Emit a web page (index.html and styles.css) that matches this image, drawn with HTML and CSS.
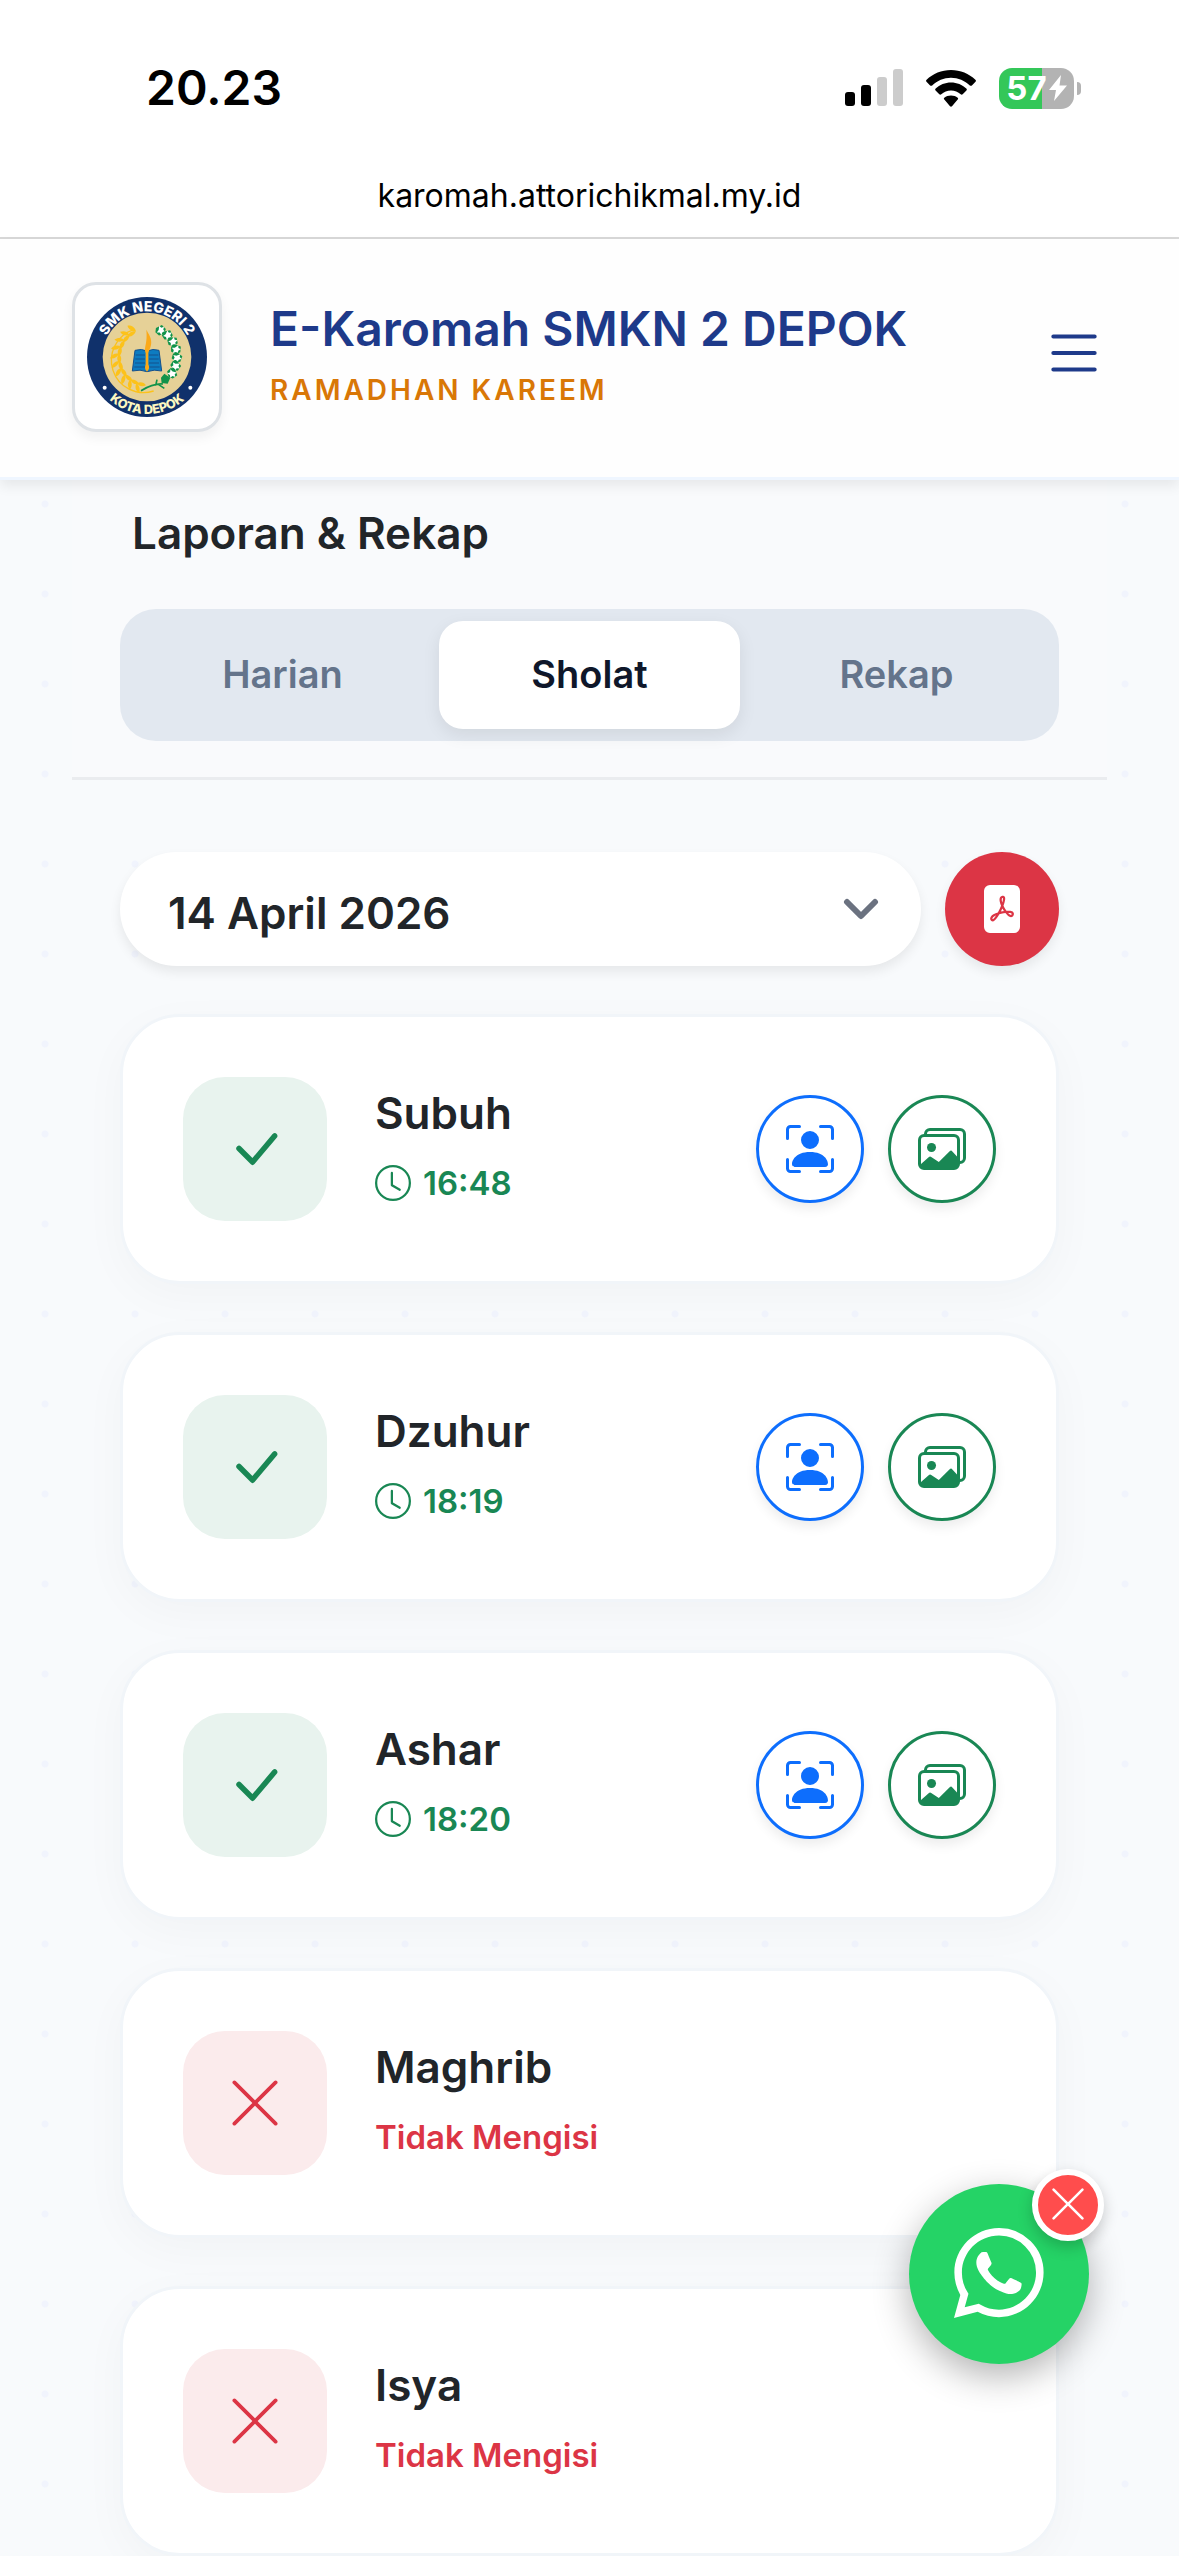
FILE: index.html
```html
<!DOCTYPE html>
<html lang="id">
<head>
    <meta charset="UTF-8">
    <meta name="viewport" content="width=device-width, initial-scale=1">
    <title>E-Karomah SMKN 2 DEPOK</title>
    <link rel="stylesheet" href="styles.css">
</head>
<body>
    <!-- icons -->
    <svg class="sprite" aria-hidden="true">
        <symbol id="check" viewBox="0 0 16 16"><path d="M12.736 3.97a.733.733 0 0 1 1.047 0c.286.289.29.756.01 1.05L7.88 12.01a.733.733 0 0 1-1.065.02L3.217 8.384a.757.757 0 0 1 0-1.06.733.733 0 0 1 1.047 0l3.052 3.093 5.4-6.425z"/></symbol>
        <symbol id="cross" viewBox="0 0 16 16"><path d="M2.146 2.854a.5.5 0 1 1 .708-.708L8 7.293l5.146-5.147a.5.5 0 0 1 .708.708L8.707 8l5.147 5.146a.5.5 0 0 1-.708.708L8 8.707l-5.146 5.147a.5.5 0 0 1-.708-.708L7.293 8z"/></symbol>
        <symbol id="clock" viewBox="0 0 16 16"><path d="M8 3.5a.5.5 0 0 0-1 0V9a.5.5 0 0 0 .252.434l3.5 2a.5.5 0 0 0 .496-.868L8 8.71z"/><path d="M8 16A8 8 0 1 0 8 0a8 8 0 0 0 0 16m7-8A7 7 0 1 1 1 8a7 7 0 0 1 14 0"/></symbol>
        <symbol id="person" viewBox="0 0 16 16"><path d="M1.5 1a.5.5 0 0 0-.5.5v3a.5.5 0 0 1-1 0v-3A1.5 1.5 0 0 1 1.5 0h3a.5.5 0 0 1 0 1zM11 .5a.5.5 0 0 1 .5-.5h3A1.5 1.5 0 0 1 16 1.5v3a.5.5 0 0 1-1 0v-3a.5.5 0 0 0-.5-.5h-3a.5.5 0 0 1-.5-.5M.5 11a.5.5 0 0 1 .5.5v3a.5.5 0 0 0 .5.5h3a.5.5 0 0 1 0 1h-3A1.5 1.5 0 0 1 0 14.5v-3a.5.5 0 0 1 .5-.5m15 0a.5.5 0 0 1 .5.5v3a1.5 1.5 0 0 1-1.5 1.5h-3a.5.5 0 0 1 0-1h3a.5.5 0 0 0 .5-.5v-3a.5.5 0 0 1 .5-.5"/><path d="M3 14s-1 0-1-1 1-4 6-4 6 3 6 4-1 1-1 1zm8-9a3 3 0 1 1-6 0 3 3 0 0 1 6 0"/></symbol>
        <symbol id="images" viewBox="0 0 16 16"><path d="M4.502 9a1.5 1.5 0 1 0 0-3 1.5 1.5 0 0 0 0 3"/><path d="M14.002 13a2 2 0 0 1-2 2h-10a2 2 0 0 1-2-2V5A2 2 0 0 1 2 3a2 2 0 0 1 2-2h10a2 2 0 0 1 2 2v8a2 2 0 0 1-1.998 2M14 2H4a1 1 0 0 0-1 1h9.002a2 2 0 0 1 2 2v7A1 1 0 0 0 15 11V3a1 1 0 0 0-1-1M2.002 4a1 1 0 0 0-1 1v8l2.646-2.354a.5.5 0 0 1 .63-.062l2.66 1.773 3.71-3.71a.5.5 0 0 1 .577-.094l1.777 1.947V5a1 1 0 0 0-1-1z"/></symbol>
    </svg>

    <div class="status">
        <div class="status-bar">
            <span class="time">20.23</span>
            <div class="status-icons">
                <svg width="58" height="38" viewBox="0 0 58 38">
                    <rect x="0" y="23" width="10" height="14" rx="3"/>
                    <rect x="16" y="16" width="10" height="21" rx="3"/>
                    <rect x="32" y="8" width="10" height="29" rx="3" fill="#ccc"/>
                    <rect x="48" y="0" width="10" height="37" rx="3" fill="#ccc"/>
                </svg>
                <svg width="50" height="37" viewBox="0 0 50 37">
                    <path d="M25 0C15.600 0 7 3.700.600 9.700c-.7.700-.7 1.500-.1 2.100l3.600 3.600c.6.600 1.400.6 2.100 0C11.200 10.700 17.800 7.800 25 7.800s13.800 2.900 18.800 7.600c.7.600 1.500.6 2.100 0l3.600-3.600c.6-.6.6-1.400-.1-2.100C43 3.700 34.400 0 25 0z"/>
                    <path d="M25 12.500c-5.900 0-11.300 2.300-15.300 6-.7.600-.7 1.500-.1 2.100l3.700 3.600c.6.600 1.400.6 2 .1 2.600-2.400 6-3.800 9.700-3.800s7.100 1.400 9.700 3.800c.6.500 1.400.5 2-.1l3.700-3.600c.6-.6.6-1.500-.1-2.100-4-3.700-9.400-6-15.300-6z"/>
                    <path d="M25 25.500c-2.600 0-4.900.9-6.700 2.200-.6.500-.6 1.200 0 1.800l5.700 6.800c.6.600 1.400.6 2 0l5.700-6.800c.6-.6.6-1.300 0-1.800-1.800-1.300-4.100-2.200-6.700-2.200z"/>
                </svg>
                <div class="battery">
                    <span>57</span>
                    <svg width="18" height="26" viewBox="0 0 18 26"><path d="M12 0 0 15h7L5 26 18 10.500h-7.500z" fill="#fff"/></svg>
                </div>
            </div>
        </div>
        <div class="url">karomah.attorichikmal.my.id</div>
    </div>

    <header class="navbar">
        <div class="logo">
            <svg viewBox="0 0 360 360" role="img" aria-label="SMK Negeri 2 Kota Depok">
                <defs>
                    <path id="arcTop" d="M57 237a136 136 0 1 1 246 0"/>
                    <path id="arcBottom" d="M9 180a171 171 0 0 0 342 0"/>
                    <g id="grain" fill="#fcc21b">
                        <path d="M178 96c-12-5-19-15-17-25 11 3 19 12 17 25z"/>
                        <path d="M178 96c-9 9-20 11-28 5 6-9 17-12 28-5z"/>
                    </g>
                    <g id="bud">
                        <path d="M166 90l12-16 16 6 2 14-12 12-14-4z" fill="#11934a"/>
                        <path d="M172 80l8 2 6-6 2 9 8 3-7 5 1 9-8-5-8 4 2-9z" fill="#fff"/>
                    </g>
                </defs>
                <circle cx="180" cy="180" r="180" fill="#10316b"/>
                <circle cx="180" cy="180" r="133" fill="#e6d197"/>
                <text class="seal-top"><textPath href="#arcTop" startOffset="50%">SMK NEGERI 2</textPath></text>
                <text class="seal-bottom"><textPath href="#arcBottom" startOffset="50%">KOTA DEPOK</textPath></text>
                <circle cx="53" cy="272" r="6" fill="#fff"/>
                <circle cx="310" cy="272" r="6" fill="#fff"/>
                <path d="M140 98A92 92 0 0 0 200 282" fill="none" stroke="#fcc21b" stroke-width="4"/>
                <use href="#grain" transform="rotate(-22 180 180)"/>
                <use href="#grain" transform="rotate(-37 180 180)"/>
                <use href="#grain" transform="rotate(-52 180 180)"/>
                <use href="#grain" transform="rotate(-67 180 180)"/>
                <use href="#grain" transform="rotate(-82 180 180)"/>
                <use href="#grain" transform="rotate(-97 180 180)"/>
                <use href="#grain" transform="rotate(-112 180 180)"/>
                <use href="#grain" transform="rotate(-127 180 180)"/>
                <use href="#grain" transform="rotate(-142 180 180)"/>
                <use href="#grain" transform="rotate(-157 180 180)"/>
                <use href="#bud" transform="rotate(26 180 180)"/>
                <use href="#bud" transform="rotate(42 180 180)"/>
                <use href="#bud" transform="rotate(58 180 180)"/>
                <use href="#bud" transform="rotate(74 180 180)"/>
                <use href="#bud" transform="rotate(90 180 180)"/>
                <use href="#bud" transform="rotate(106 180 180)"/>
                <use href="#bud" transform="rotate(122 180 180)"/>
                <path d="M162 281c20-12 42-22 66-20M206 266l4-18M214 262l18 12" fill="none" stroke="#11934a" stroke-width="5"/>
                <path d="M222 242l10-12 18 12-8 18-18-2z" fill="#11934a"/>
                <path d="M144 160q20-6 36 2 18-8 36-2l8 62q-22-6-44 2-20-8-44-2z" fill="#0d7cc1" stroke="#14508c" stroke-width="3"/>
                <path d="M146 174h28M145 186h29M144 198h30M142 210h32M186 174h28M186 186h29M186 198h30M186 210h32" stroke="#14508c" stroke-width="3"/>
                <path d="M180 224c-8-8-6-14-4-22v-34c-6-20 6-26 2-70 6 12 18 26 14 46-2 10-6 16-8 24v34c4 8 4 14-4 22z" fill="#fba919"/>
            </svg>
        </div>
        <div class="brand">
            <h1>E-Karomah SMKN 2 DEPOK</h1>
            <p>RAMADHAN KAREEM</p>
        </div>
        <button class="menu-btn" type="button" aria-label="Menu">
            <svg width="66" height="66" viewBox="0 0 16 16"><path fill-rule="evenodd" d="M2.500 12a.5.5 0 0 1 .5-.5h10a.5.5 0 0 1 0 1H3a.5.5 0 0 1-.5-.5m0-4a.5.5 0 0 1 .5-.5h10a.5.5 0 0 1 0 1H3a.5.5 0 0 1-.5-.5m0-4a.5.5 0 0 1 .5-.5h10a.5.5 0 0 1 0 1H3a.5.5 0 0 1-.5-.5"/></svg>
        </button>
    </header>

    <main>
        <section class="report-head">
            <h2>Laporan &amp; Rekap</h2>
            <div class="tabs">
                <button type="button">Harian</button>
                <button type="button" class="active">Sholat</button>
                <button type="button">Rekap</button>
            </div>
        </section>

        <section class="report">
            <div class="filter">
                <div class="date">
                    <select aria-label="Tanggal">
                        <option>14 April 2026</option>
                    </select>
                    <svg class="chevron" width="36" height="22" viewBox="0 0 36 22"><path d="M4 4l14 14L32 4"/></svg>
                </div>
                <button class="pdf-btn" type="button" aria-label="PDF">
                    <svg width="48" height="48" viewBox="0 0 16 16"><path d="M5.523 10.424q.21-.124.459-.238a8 8 0 0 1-.45.606c-.28.337-.498.516-.635.572l-.035.012a.3.3 0 0 1-.026-.044c-.056-.11-.054-.216.04-.36.106-.165.319-.354.647-.548m2.455-1.647q-.178.037-.356.078a21 21 0 0 0 .5-1.050 12 12 0 0 0 .51.858q-.326.048-.654.114m2.525.939a4 4 0 0 1-.435-.41q.344.007.612.054c.317.057.466.147.518.209a.1.1 0 0 1 .026.064.44.440 0 0 1-.06.2.3.300 0 0 1-.094.124.1.1 0 0 1-.069.015c-.09-.003-.258-.066-.498-.256M8.278 4.970c-.04.244-.108.524-.2.829a5 5 0 0 1-.089-.346c-.076-.353-.087-.63-.046-.822.038-.177.110-.248.196-.283a.5.5 0 0 1 .145-.040c.013.030.028.092.032.198q.008.183-.038.465z"/><path fill-rule="evenodd" d="M4 0h8a2 2 0 0 1 2 2v12a2 2 0 0 1-2 2H4a2 2 0 0 1-2-2V2a2 2 0 0 1 2-2m.165 11.668c.09.180.230.343.438.419.207.075.412.040.580-.030.318-.130.635-.436.926-.786.333-.401.683-.927 1.021-1.510a11.600 11.600 0 0 1 1.997-.406c.300.383.610.713.910.950.280.220.603.403.934.417a.86.860 0 0 0 .510-.138c.155-.101.270-.247.354-.416.090-.181.145-.370.138-.563a.84.840 0 0 0-.200-.518c-.226-.270-.596-.400-.960-.465a5.800 5.800 0 0 0-1.335-.050 11 11 0 0 1-.980-1.686c.250-.660.437-1.284.520-1.794.036-.218.055-.426.048-.614a1.240 1.240 0 0 0-.127-.538.700.700 0 0 0-.477-.365c-.202-.043-.410 0-.601.077-.377.150-.576.470-.651.823-.073.340-.040.736.046 1.136.088.406.238.848.430 1.295a20 20 0 0 1-1.062 2.227 7.700 7.700 0 0 0-1.482.645c-.370.220-.699.480-.897.787-.210.326-.275.714-.080 1.103"/></svg>
                </button>
            </div>

            <ul class="list">
                <li class="card">
                    <div class="mark done"><svg><use href="#check"/></svg></div>
                    <div class="info">
                        <h3>Subuh</h3>
                        <p class="done-text"><svg><use href="#clock"/></svg>16:48</p>
                    </div>
                    <div class="actions">
                        <button class="blue" type="button" aria-label="Foto wajah"><svg><use href="#person"/></svg></button>
                        <button class="green" type="button" aria-label="Galeri"><svg><use href="#images"/></svg></button>
                    </div>
                </li>
                <li class="card">
                    <div class="mark done"><svg><use href="#check"/></svg></div>
                    <div class="info">
                        <h3>Dzuhur</h3>
                        <p class="done-text"><svg><use href="#clock"/></svg>18:19</p>
                    </div>
                    <div class="actions">
                        <button class="blue" type="button" aria-label="Foto wajah"><svg><use href="#person"/></svg></button>
                        <button class="green" type="button" aria-label="Galeri"><svg><use href="#images"/></svg></button>
                    </div>
                </li>
                <li class="card">
                    <div class="mark done"><svg><use href="#check"/></svg></div>
                    <div class="info">
                        <h3>Ashar</h3>
                        <p class="done-text"><svg><use href="#clock"/></svg>18:20</p>
                    </div>
                    <div class="actions">
                        <button class="blue" type="button" aria-label="Foto wajah"><svg><use href="#person"/></svg></button>
                        <button class="green" type="button" aria-label="Galeri"><svg><use href="#images"/></svg></button>
                    </div>
                </li>
                <li class="card">
                    <div class="mark missed"><svg><use href="#cross"/></svg></div>
                    <div class="info">
                        <h3>Maghrib</h3>
                        <p class="missed-text">Tidak Mengisi</p>
                    </div>
                </li>
                <li class="card">
                    <div class="mark missed"><svg><use href="#cross"/></svg></div>
                    <div class="info">
                        <h3>Isya</h3>
                        <p class="missed-text">Tidak Mengisi</p>
                    </div>
                </li>
            </ul>
        </section>
    </main>

    <div class="wa">
        <a href="#" class="wa-link" aria-label="WhatsApp">
            <svg width="90" height="90" viewBox="0 0 16 16"><path d="M13.601 2.326A7.850 7.850 0 0 0 7.994 0C3.627 0 .068 3.558.064 7.926c0 1.399.366 2.760 1.057 3.965L0 16l4.204-1.102a7.900 7.900 0 0 0 3.790.965h.004c4.368 0 7.926-3.558 7.930-7.930A7.900 7.900 0 0 0 13.600 2.326zM7.994 14.521a6.600 6.600 0 0 1-3.356-.920l-.240-.144-2.494.654.666-2.433-.156-.251a6.560 6.560 0 0 1-1.007-3.505c0-3.626 2.957-6.584 6.591-6.584a6.560 6.560 0 0 1 4.660 1.931 6.560 6.560 0 0 1 1.928 4.660c-.004 3.639-2.961 6.592-6.592 6.592m3.615-4.934c-.197-.099-1.170-.578-1.353-.646-.182-.065-.315-.099-.445.099-.133.197-.513.646-.627.775-.114.133-.232.148-.430.050-.197-.100-.836-.308-1.592-.985-.590-.525-.985-1.175-1.103-1.372-.114-.198-.011-.304.088-.403.087-.088.197-.232.296-.346.100-.114.133-.198.198-.330.065-.134.034-.248-.015-.347-.050-.099-.445-1.076-.612-1.470-.160-.389-.323-.335-.445-.340-.114-.007-.247-.007-.380-.007a.730.730 0 0 0-.529.247c-.182.198-.691.677-.691 1.654s.710 1.916.810 2.049c.098.133 1.394 2.132 3.383 2.992.470.205.840.326 1.129.418.475.152.904.129 1.246.080.380-.058 1.171-.480 1.338-.943.164-.464.164-.860.114-.943-.049-.084-.182-.133-.380-.232"/></svg>
        </a>
        <button class="wa-close" type="button" aria-label="Tutup"><svg><use href="#cross"/></svg></button>
    </div>
</body>
</html>
```
FILE: styles.css
```css
*{
    margin: 0;
    padding: 0;
    box-sizing: border-box;
}
body{
    font-family: Inter, sans-serif;
    font-size: 48px;
    color: #212529;
    background-color: #f8fafc;
    background-image: radial-gradient(circle, #f1f4fd 3px, transparent 4px);
    background-size: 90px 90px;
    background-position: 0 9px;
}
ul{
    list-style-type: none;
}
button, select{
    font-family: inherit;
    border: none;
    cursor: pointer;
}
svg{
    display: block;
    fill: currentColor;
}
.sprite{
    position: absolute;
    width: 0;
    height: 0;
}

/* status bar */
.status{
    background: #fff;
    color: #000;
    border-bottom: 2px solid #d8d8d8;
}
.status-bar{
    display: flex;
    justify-content: space-between;
    align-items: center;
    padding: 58px 105px 18px 146px;
}
.time{
    font-weight: 600;
    line-height: 60px;
}
.status-icons{
    display: flex;
    align-items: center;
    gap: 23px;
}
.battery{
    position: relative;
    display: flex;
    align-items: center;
    justify-content: center;
    gap: 2px;
    width: 75px;
    height: 41px;
    border-radius: 13px;
    color: #fff;
    background: linear-gradient(to right, #34c759 57%, #b3b3b3 57%);
    font-size: 33px;
    font-weight: 700;
    line-height: 41px;
}
.battery::after{
    content: "";
    position: absolute;
    right: -7px;
    top: 14px;
    width: 4px;
    height: 13px;
    border-radius: 0 4px 4px 0;
    background: #b3b3b3;
}
.url{
    padding: 36px 0 17px;
    font-size: 32px;
    line-height: 48px;
    text-align: center;
}

/* header */
.navbar{
    position: relative;
    display: flex;
    align-items: center;
    padding: 43px 72px 45px;
    background: #fefefe;
    border-bottom: 3px solid #eff6ff;
    box-shadow: 0 6px 12px rgba(0, 0, 0, 0.075);
}
.logo{
    width: 150px;
    height: 150px;
    padding: 12px;
    background: #fff;
    border: 3px solid #dee2e6;
    border-radius: 24px;
    box-shadow: 0 6px 12px rgba(0, 0, 0, 0.05);
}
.logo svg{
    overflow: visible;
}
.seal-top, .seal-bottom{
    font-weight: 800;
    font-size: 42px;
    text-anchor: middle;
    fill: #fff;
}
.seal-bottom{
    font-size: 38px;
    fill: #fdf8c0;
}
.brand{
    flex: 1;
    margin-left: 48px;
}
.brand h1{
    font-size: 48px;
    font-weight: 600;
    line-height: 66px;
    color: #1e3a8a;
}
.brand p{
    font-size: 28px;
    font-weight: 600;
    line-height: 56px;
    letter-spacing: 3px;
    color: #d97706;
}
.menu-btn{
    padding-bottom: 9px;
    background: none;
    color: #1e3a8a;
}

/* judul + tab */
.report-head{
    margin: 0 72px;
    padding: 23px 48px 36px;
    background: #f9fafc;
    border-bottom: 3px solid #eaecef;
}
.report-head h2{
    padding-left: 12px;
    font-size: 44px;
    font-weight: 600;
    line-height: 60px;
}
.tabs{
    display: flex;
    gap: 6px;
    margin-top: 46px;
    padding: 12px;
    background: #e2e8f0;
    border-radius: 36px;
}
.tabs button{
    flex: 1;
    height: 108px;
    padding-bottom: 3px;
    border-radius: 24px;
    background: none;
    color: #64748b;
    font-size: 38px;
    font-weight: 600;
}
.tabs .active{
    background: #fff;
    color: #0f172a;
    box-shadow: 0 6px 18px rgba(0, 0, 0, 0.08);
}

/* filter */
.report{
    padding: 72px 120px 0;
}
.filter{
    display: flex;
    gap: 24px;
    margin-bottom: 48px;
}
.date{
    position: relative;
    flex: 1;
}
.date select{
    width: 100%;
    height: 114px;
    padding: 8px 120px 0 48px;
    appearance: none;
    background: #fff;
    border-radius: 57px;
    box-shadow: 0 6px 12px rgba(0, 0, 0, 0.075);
    color: #212529;
    font-size: 44px;
    font-weight: 600;
}
.chevron{
    position: absolute;
    right: 42px;
    top: 46px;
    fill: none;
    stroke: #6b7280;
    stroke-width: 6;
    stroke-linecap: round;
    stroke-linejoin: round;
    pointer-events: none;
}
.pdf-btn{
    display: flex;
    align-items: center;
    justify-content: center;
    width: 114px;
    height: 114px;
    border-radius: 50%;
    background: #dc3545;
    color: #fff;
    box-shadow: 0 6px 12px rgba(0, 0, 0, 0.075);
}

/* kartu sholat */
.list{
    display: flex;
    flex-direction: column;
    gap: 48px;
}
.card{
    display: flex;
    align-items: center;
    padding: 60px;
    background: #fff;
    border: 3px solid #f1f5f9;
    border-radius: 60px;
    box-shadow: 0 12px 45px rgba(0, 0, 0, 0.03);
}
.mark{
    display: flex;
    align-items: center;
    justify-content: center;
    width: 144px;
    height: 144px;
    border-radius: 42px;
}
.mark svg{
    width: 60px;
    height: 60px;
}
.done{
    background: #e8f3ee;
    color: #198754;
}
.missed{
    background: #fbebec;
    color: #dc3545;
}
.info{
    flex: 1;
    margin-left: 48px;
}
.info h3{
    margin-bottom: 12px;
    font-size: 44px;
    font-weight: 600;
    line-height: 56px;
}
.info p{
    display: flex;
    align-items: center;
    gap: 12px;
    font-size: 33px;
    font-weight: 600;
    line-height: 60px;
}
.info svg{
    width: 36px;
    height: 36px;
}
.done-text{
    color: #198754;
}
.missed-text{
    color: #dc3545;
}
.actions{
    display: flex;
    gap: 24px;
}
.actions button{
    display: flex;
    align-items: center;
    justify-content: center;
    width: 108px;
    height: 108px;
    border: 3px solid currentColor;
    border-radius: 50%;
    background: #fff;
    box-shadow: 0 6px 12px rgba(0, 0, 0, 0.075);
}
.actions svg{
    width: 48px;
    height: 48px;
}
.actions .blue{
    color: #0d6efd;
}
.actions .green{
    color: #198754;
}

/* tombol whatsapp */
.wa{
    position: fixed;
    right: 90px;
    bottom: 192px;
}
.wa-link{
    display: flex;
    align-items: center;
    justify-content: center;
    width: 180px;
    height: 180px;
    padding-bottom: 3px;
    border-radius: 50%;
    background: #25d366;
    color: #fff;
    box-shadow: 0 12px 36px rgba(0, 0, 0, 0.3);
}
.wa-close{
    position: absolute;
    top: -15px;
    right: -15px;
    display: flex;
    align-items: center;
    justify-content: center;
    width: 72px;
    height: 72px;
    padding-bottom: 3px;
    border: 6px solid #fff;
    border-radius: 50%;
    background: #ff4d4d;
    color: #fff;
    box-shadow: 0 6px 15px rgba(0, 0, 0, 0.2);
}
.wa-close svg{
    width: 42px;
    height: 42px;
}
```
